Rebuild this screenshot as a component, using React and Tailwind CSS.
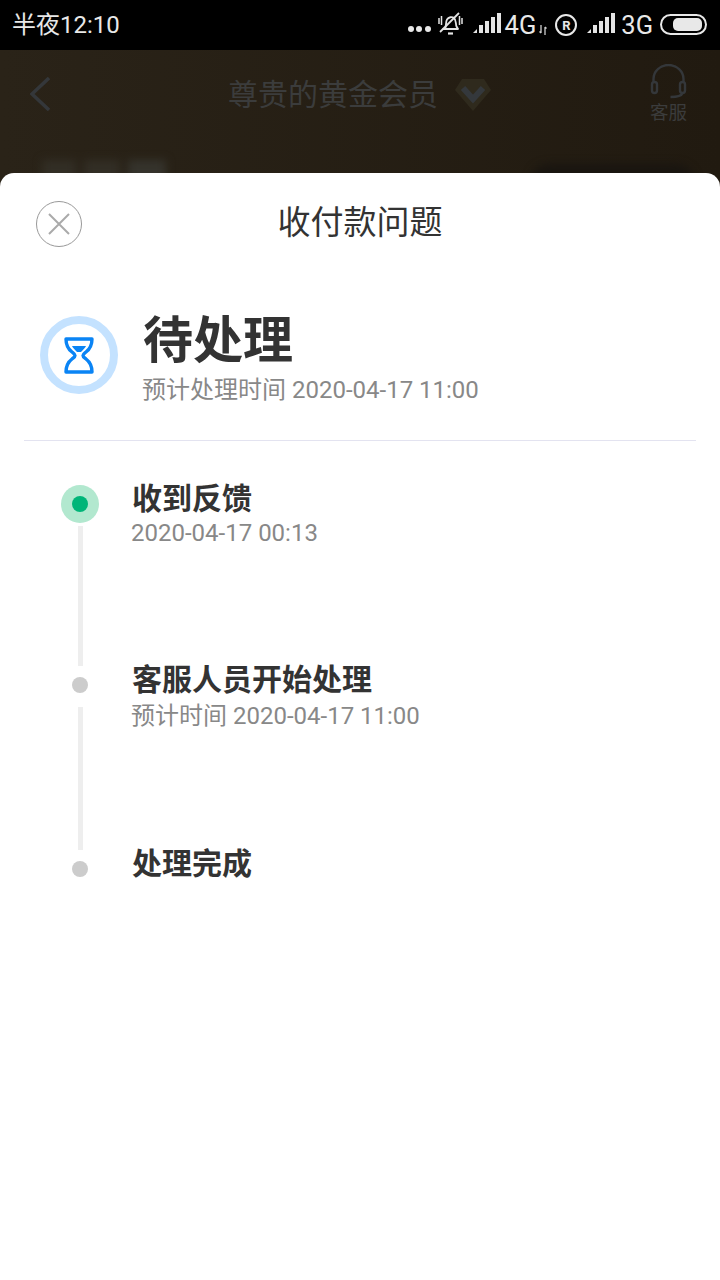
import React from "react";

const font = { fontFamily: '"Roboto", "Noto Sans CJK SC", sans-serif' };

function Signal() {
  return (
    <svg width="28" height="20" viewBox="0 0 28 20" fill="#e4e4e4">
      <path d="M0 20l4-4v4z" />
      <rect x="6" y="12" width="4" height="8" />
      <rect x="12" y="8" width="4" height="12" />
      <rect x="18" y="4" width="4" height="16" />
      <rect x="24" y="0" width="4" height="20" />
    </svg>
  );
}

function StatusBar() {
  return (
    <div className="h-[50px] bg-black flex items-center justify-between pl-[12px] pr-[13px] text-[#e8e8e8] shrink-0">
      <span className="text-[24px] leading-none">半夜12:10</span>
      <div className="flex items-center">
        <div className="flex gap-[2.5px] mt-[8px]">
          <div className="w-[6px] h-[6px] rounded-full bg-[#e8e8e8]" />
          <div className="w-[6px] h-[6px] rounded-full bg-[#e8e8e8]" />
          <div className="w-[6px] h-[6px] rounded-full bg-[#e8e8e8]" />
        </div>
        <svg className="ml-[7px] mt-[-2px]" width="25" height="24" viewBox="0 0 25 24" fill="none" stroke="#e4e4e4" strokeWidth="1.800">
          <path d="M7 17c1.500-3 .5-7 2-9.500 1.500-2.500 5-3 7-1.500 2.500 2 1.500 6 2.500 8.500.5 1 1 2 2 2.500H4.500z" />
          <path d="M10 21.500h5" strokeWidth="2.200" />
          <path d="M2 20 21 1" />
          <path d="M1 6v6M3.500 4v9M21.500 4v9M24 6v6" strokeWidth="1.500" />
        </svg>
        <div className="ml-[10px] mt-[-5px]"><Signal /></div>
        <span className="ml-[4px] text-[25.500px] leading-none mt-[1px]">4G</span>
        <svg className="ml-[3px] mt-[9px]" width="8" height="10" viewBox="0 0 8 10" fill="none" stroke="#d0d0d0" strokeWidth="1.300">
          <path d="M2 0v8M.5 6.500 2 8M6 10V2M6 2l1.500 1.500" />
        </svg>
        <div className="ml-[8px] w-[22px] h-[22px] rounded-full border-2 border-[#e8e8e8] flex items-center justify-center text-[13px] font-bold leading-none">R</div>
        <div className="ml-[10px] mt-[-5px]"><Signal /></div>
        <span className="ml-[6px] text-[25.500px] leading-none mt-[1px]">3G</span>
        <div className="ml-[7px] w-[47px] h-[21px] rounded-full border-2 border-[#e8e8e8] flex items-center pl-[11px] pr-[3px] mt-[-1px]">
          <div className="w-[30px] h-[13px] rounded-[5px] bg-[#e8e8e8]" />
        </div>
      </div>
    </div>
  );
}

// dimmed page behind the sheet
function Backdrop() {
  return (
    <div className="h-[140px] bg-gradient-to-r from-[#2a2318] to-[#211a10] relative shrink-0 overflow-hidden">
      <div className="h-[92px] flex items-center relative">
        <svg className="ml-[30px] mt-[-4px]" width="20" height="34" viewBox="0 0 20 34" fill="none" stroke="#34373a" strokeWidth="3.500">
          <path d="M19 1 2 17l17 16" />
        </svg>
        <div className="flex items-center ml-[178px] mt-[-3px]">
          <span className="text-[30px] leading-none text-[#3b3c3c]">尊贵的黄金会员</span>
          <svg className="ml-[16px]" width="38" height="34" viewBox="0 0 38 34" fill="none">
            <path d="M8 1h22l7 11-18 21L1 12z" fill="#2f2a1d" />
            <path d="M9 10l10 11 10-11" stroke="#34383c" strokeWidth="6" />
          </svg>
        </div>
        <div className="absolute right-[33px] top-[14px] flex flex-col items-center">
          <svg width="37" height="36" viewBox="0 0 36 36" fill="none" stroke="#34373a" strokeWidth="2.400">
            <path d="M3 18v-3a15 14 0 0 1 30 0v3" />
            <rect x="1.500" y="18" width="5" height="11" rx="2.500" />
            <rect x="29.500" y="18" width="5" height="11" rx="2.500" />
            <path d="M32 29c-1 3-5 4-12 4" />
          </svg>
          <span className="text-[18.500px] leading-[20px] text-[#3b3c3c] mt-[3px]">客服</span>
        </div>
      </div>
      <div className="absolute left-[42px] top-[110px] flex gap-[8px] blur-[4px]">
        <div className="w-[34px] h-[40px] bg-[#322e25]" />
        <div className="w-[36px] h-[40px] bg-[#322e25]" />
        <div className="w-[38px] h-[40px] bg-[#35332c]" />
      </div>
      <div className="absolute left-[530px] top-[114px] w-[165px] h-[40px] rounded-[20px] bg-[#191510] blur-[4px]" />
    </div>
  );
}

function Step({ title, sub, active, last, titleClass, subClass, lineClass }) {
  return (
    <div className="flex">
      <div className="w-[112px] mr-[-5px] flex flex-col items-center shrink-0">
        {active ? (
          <div className="w-[38px] h-[38px] rounded-full bg-[#b2e8cf] flex items-center justify-center">
            <div className="w-[16px] h-[16px] rounded-full bg-[#00b578]" />
          </div>
        ) : (
          <div className="w-[16px] h-[16px] rounded-full bg-[#cccccc]" />
        )}
        {!last && <div className={`w-[5px] bg-[#eeeeee] ${lineClass}`} />}
      </div>
      <div className={`ml-[1px] ${titleClass}`}>
        <div className="text-[30px] leading-[36px] font-bold text-[#333333]">{title}</div>
        {sub && <div className={`text-[24px] leading-[30px] text-[#888888] ml-[-1px] ${subClass}`}>{sub}</div>}
      </div>
    </div>
  );
}

export default function App() {
  return (
    <div className="w-[720px] h-[1280px] flex flex-col bg-white overflow-hidden" style={font}>
      <StatusBar />
      <Backdrop />
      <div className="flex-1 bg-white rounded-t-[14px] mt-[-17px] relative px-[24px]">
        <div className="h-[100px] flex items-center relative">
          <button className="absolute left-[12px] top-[28px] w-[46px] h-[46px] rounded-full border border-[#999999] flex items-center justify-center">
            <svg width="24" height="24" viewBox="0 0 24 24" fill="none" stroke="#aaaaaa" strokeWidth="2">
              <path d="M2 2l20 20M22 2 2 22" />
            </svg>
          </button>
          <div className="w-full text-center text-[33px] leading-none text-[#333333] mt-[-1px]">收付款问题</div>
        </div>
        <div className="flex h-[168px] border-b border-[#e3e3f0]">
          <div className="ml-[16px] mt-[43px] w-[78px] h-[78px] rounded-full border-[8px] border-[#c4e2ff] flex items-center justify-center shrink-0">
            <svg width="30" height="37" viewBox="0 0 30 37" fill="none" stroke="#0a84f5" strokeWidth="3.400" strokeLinejoin="round">
              <path d="M2 2h26c0 7-2 10-6 13-2 1.500-3 2-3 3.500s1 2 3 3.500c4 3 6 6 6 13H2c0-7 2-10 6-13 2-1.500 3-2 3-3.500s-1-2-3-3.500C4 12 2 9 2 2z" />
              <path d="M8 9h14c-1 2-2.500 3.500-5 6h-4c-2.500-2.500-4-4-5-6z" fill="#0a84f5" stroke="none" />
            </svg>
          </div>
          <div className="ml-[25px] mt-[40px]">
            <div className="text-[50px] leading-[56px] font-bold text-[#333333]">待处理</div>
            <div className="text-[24px] leading-[30px] text-[#888888] ml-[-1px] mt-[6px]">预计处理时间 2020-04-17 11:00</div>
          </div>
        </div>
        <div className="pt-[44px]">
          <Step active title="收到反馈" sub="2020-04-17 00:13" titleClass="mt-[-4px]" lineClass="mt-[3px] h-[140px] mb-[11px]" subClass="mt-[1px]" />
          <Step title="客服人员开始处理" sub="预计时间 2020-04-17 11:00" titleClass="mt-[-15px]" lineClass="mt-[14px] h-[143px] mb-[11px]" subClass="mt-[3px]" />
          <Step last title="处理完成" titleClass="mt-[-15px]" />
        </div>
      </div>
    </div>
  );
}
